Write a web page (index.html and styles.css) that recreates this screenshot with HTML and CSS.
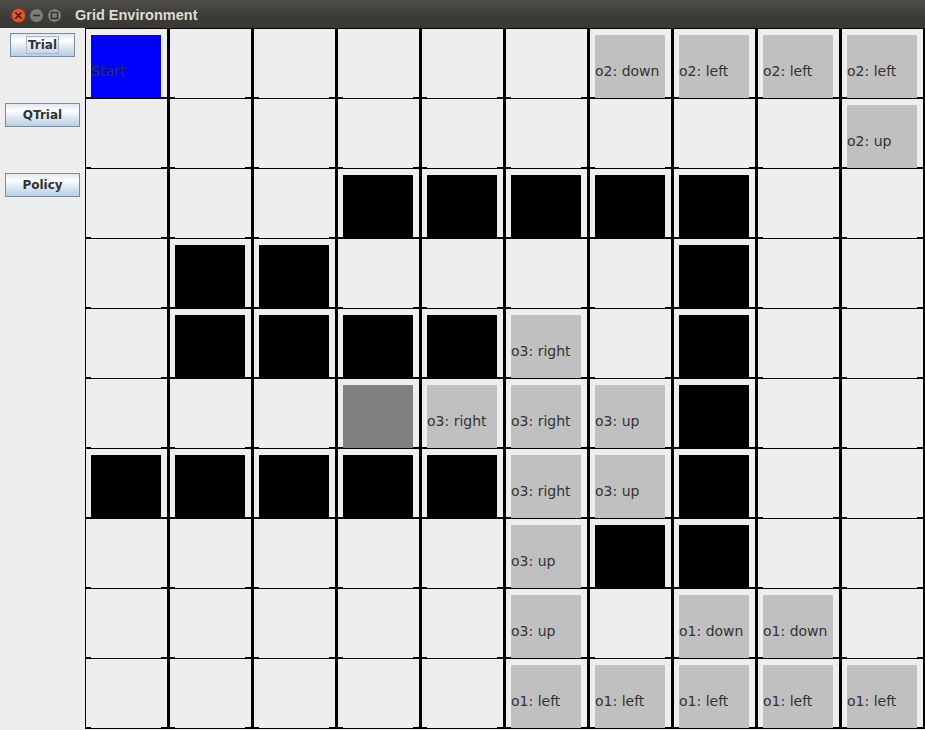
FILE: index.html
```html
<!DOCTYPE html>
<html lang="en">
<head>
<meta charset="UTF-8">
<meta name="viewport" content="width=device-width, initial-scale=1.0">
<title>Grid Environment</title>
<link rel="stylesheet" href="styles.css">
</head>
<body>

<div class="window">
    <div class="titlebar">
        <div class="winbtns">
            <svg width="64" height="28" viewBox="0 0 64 28">
                <circle cx="18.5" cy="15.5" r="7" fill="#e8572a" stroke="#8f3414" stroke-width="1"/>
                <path d="M15.8 12.8 L21.2 18.2 M21.2 12.8 L15.8 18.2" stroke="#3a1a0c" stroke-width="1.6" stroke-linecap="round"/>
                <circle cx="36.5" cy="15.5" r="7" fill="#7d7b75" stroke="#3b3a36" stroke-width="1"/>
                <path d="M33.2 15.5 L39.8 15.5" stroke="#2f2e2b" stroke-width="1.6"/>
                <circle cx="54.5" cy="15.5" r="7" fill="#7d7b75" stroke="#3b3a36" stroke-width="1"/>
                <rect x="51.5" y="12.5" width="6" height="6" fill="none" stroke="#2f2e2b" stroke-width="1.3"/>
            </svg>
        </div>
        <span class="title">Grid Environment</span>
    </div>

    <div class="content">
        <div class="sidebar">
            <div class="slot"><button class="btn btn-small"><span class="focus">Trial</span></button></div>
            <div class="slot"><button class="btn">QTrial</button></div>
            <div class="slot"><button class="btn">Policy</button></div>
        </div>
        <div class="grid" id="grid"></div>
    </div>
</div>

<script type="text/javascript">
    // . empty, S start, # wall, x pit, anything else is a label
    var rows = [
        ["S", ".", ".", ".", ".", ".", "o2: down", "o2: left", "o2: left", "o2: left"],
        [".", ".", ".", ".", ".", ".", ".", ".", ".", "o2: up"],
        [".", ".", ".", "#", "#", "#", "#", "#", ".", "."],
        [".", "#", "#", ".", ".", ".", ".", "#", ".", "."],
        [".", "#", "#", "#", "#", "o3: right", ".", "#", ".", "."],
        [".", ".", ".", "x", "o3: right", "o3: right", "o3: up", "#", ".", "."],
        ["#", "#", "#", "#", "#", "o3: right", "o3: up", "#", ".", "."],
        [".", ".", ".", ".", ".", "o3: up", "#", "#", ".", "."],
        [".", ".", ".", ".", ".", "o3: up", ".", "o1: down", "o1: down", "."],
        [".", ".", ".", ".", ".", "o1: left", "o1: left", "o1: left", "o1: left", "o1: left"]
    ];

    var grid = document.getElementById('grid');
    for (var r = 0; r < rows.length; r++) {
        for (var c = 0; c < rows[r].length; c++) {
            var v = rows[r][c];
            var cell = document.createElement('div');
            cell.className = 'cell';
            var tile = document.createElement('div');
            tile.className = 'tile';
            if (v == 'S') {
                tile.className += ' start';
                tile.textContent = 'Start';
            } else if (v == '#') {
                tile.className += ' wall';
            } else if (v == 'x') {
                tile.className += ' pit';
            } else if (v != '.') {
                tile.className += ' path';
                tile.textContent = v;
            }
            cell.appendChild(tile);
            grid.appendChild(cell);
        }
    }
</script>

</body>
</html>
```

FILE: styles.css
```css
body {
    margin: 0;
    padding: 0;
    background-color: #eeeeee;
    overflow: hidden;
}
.window {
    width: 925px;
    height: 730px;
    background-color: #eeeeee;
}
.titlebar {
    height: 28px;
    display: flex;
    align-items: center;
    background: linear-gradient(to bottom, #4f4e49, #3c3b37 60%, #393834);
    box-sizing: border-box;
}
.winbtns {
    width: 64px;
    height: 28px;
    margin-right: 11px;
}
.winbtns svg {
    display: block;
}
.title {
    font-family: "Liberation Sans", Arial, sans-serif;
    font-weight: bold;
    font-size: 14.5px;
    color: #dfdbd2;
    padding-top: 1px;
}
.content {
    display: flex;
}
.sidebar {
    width: 85px;
    display: flex;
    flex-direction: column;
}
.slot {
    height: 70px;
    display: flex;
    justify-content: center;
    align-items: flex-start;
    padding-top: 5px;
    box-sizing: border-box;
}
.btn {
    width: 75px;
    height: 24px;
    padding: 0;
    border: 1px solid #7a8a99;
    border-radius: 0;
    background: linear-gradient(to bottom, #dde8f3 0%, #ffffff 30%, #dde8f3 60%, #b8cfe5 100%);
    font-family: "DejaVu Sans", sans-serif;
    font-weight: bold;
    font-size: 12px;
    color: #333333;
    display: flex;
    align-items: center;
    justify-content: center;
}
.btn-small {
    width: 65px;
}
.focus {
    border: 1px solid #a3b8cc;
    padding: 1px 1px 1px 1px;
    line-height: 14px;
}
.grid {
    display: grid;
    grid-template-columns: repeat(10, 84px);
    grid-template-rows: repeat(10, 70px);
    border-top: 1px solid #000;
}
.cell {
    box-sizing: border-box;
    width: 84px;
    height: 70px;
    border-left: 1px solid #000;
    border-right: 2px solid #000;
    border-bottom: 2px solid #000;
    padding: 6px 0 0 5px;
}
.tile {
    width: 70px;
    height: 63px;
    box-sizing: border-box;
    padding-top: 9px;
    display: flex;
    align-items: center;
    background-color: #eeeeee;
    font-family: "DejaVu Sans", sans-serif;
    font-size: 14px;
    color: #333333;
    white-space: nowrap;
}
.start {
    background-color: #0000ff;
}
.wall {
    background-color: #000000;
}
.pit {
    background-color: #808080;
}
.path {
    background-color: #c0c0c0;
}
```
